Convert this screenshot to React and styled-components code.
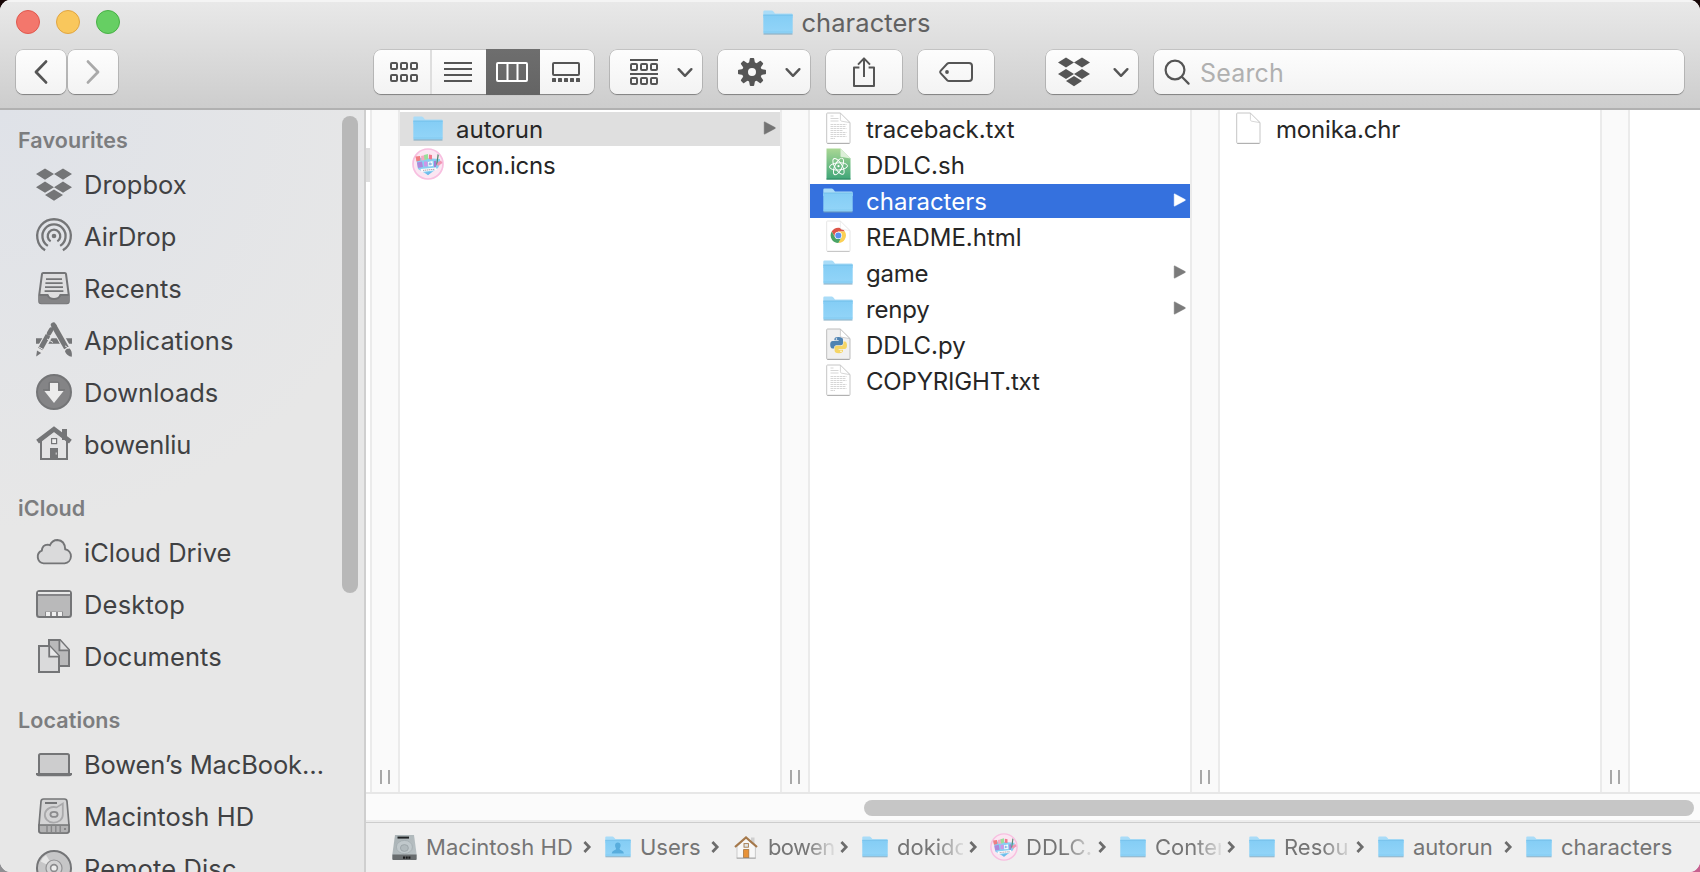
import React from "react";
import styled, { createGlobalStyle, css } from "styled-components";

const GlobalStyle = createGlobalStyle`
  *, *::before, *::after { box-sizing: border-box; }
  html, body { margin: 0; padding: 0; overflow: hidden; }
  body { font-family: Inter, "Liberation Sans", sans-serif; }
  button, input { font: inherit; border: 0; padding: 0; margin: 0; }
  svg { display: block; overflow: visible; flex: none; }
`;

/* ---------- window ---------- */

const Desktop = styled.div`
  width: 1700px;
  height: 872px;
  background:
    linear-gradient(#160606, #160606) top / 100% 50% no-repeat,
    linear-gradient(to right, #8f8f92, #c6608f) bottom / 100% 50% no-repeat;
`;

const Window = styled.div`
  display: flex;
  flex-direction: column;
  height: 100%;
  border-radius: 11px;
  overflow: hidden;
  background: #fff;
`;

const Header = styled.header`
  flex: none;
  height: 110px;
  background: linear-gradient(#e9e9e9, #cdcdcd);
  border-bottom: 2px solid #b1b1b1;
  box-shadow: inset 0 2px 0 #f4f4f4;
`;

const TitleRow = styled.div`
  display: grid;
  grid-template-columns: 1fr auto 1fr;
  align-items: center;
  height: 44px;
  padding: 0 23px 0 16px;
`;

const Lights = styled.div`
  display: flex;
  gap: 16px;
`;

const Light = styled.span`
  width: 24px;
  height: 24px;
  border-radius: 50%;
  background: ${(p) => p.$fill};
  border: 1px solid ${(p) => p.$edge};
`;

const Title = styled.h1`
  display: flex;
  align-items: center;
  gap: 9px;
  margin: 0;
  font-size: 25.5px;
  font-weight: 400;
  line-height: 30px;
  color: #616161;
  letter-spacing: ${(p) => p.$track}px;

  span { padding-top: 2px; }
`;

const Toolbar = styled.div`
  display: flex;
  align-items: center;
  padding: 6px 16px 0;
  height: 50px;
  color: #555;
`;

const raised = css`
  background: linear-gradient(#fdfdfd, #f3f3f3);
  border-radius: 7px;
  box-shadow: 0 0 0 0.6px rgba(0, 0, 0, 0.22), 0 1px 1px rgba(0, 0, 0, 0.3);
`;

const ToolButton = styled.button`
  ${raised}
  display: flex;
  align-items: center;
  justify-content: center;
  width: ${(p) => p.$width}px;
  height: 44px;
  margin-left: ${(p) => p.$before || 0}px;
  color: ${(p) => (p.disabled ? "#a9a9a9" : "#555")};
`;

const MenuButton = styled(ToolButton)`
  justify-content: space-between;
  padding: 0 9px 0 ${(p) => p.$inset}px;
`;

const Segments = styled.div`
  ${raised}
  display: flex;
  width: 220px;
  height: 44px;
  margin-left: 256px;
`;

const Segment = styled.button`
  display: flex;
  flex: 1;
  align-items: center;
  justify-content: center;
  height: ${(p) => (p.$active ? 46 : 44)}px;
  margin-top: ${(p) => (p.$active ? -1 : 0)}px;
  padding-right: 2px;
  color: ${(p) => (p.$active ? "#fff" : "#555")};
  background: ${(p) => (p.$active ? "linear-gradient(#6e6e6e, #646464)" : "transparent")};

  &:first-child {
    flex: 0 0 58px;
    padding: 0 0 0 4px;
    border-right: 2px solid #dedede;
  }
`;

const Search = styled.label`
  ${raised}
  display: flex;
  align-items: center;
  gap: 10px;
  width: 530px;
  height: 44px;
  margin-left: 16px;
  padding: 0 10px;
  color: #b0b0b0;
  font-size: 25px;
  letter-spacing: ${(p) => p.$track}px;

  span { padding-top: 2px; }
`;

const Body = styled.div`
  display: flex;
  flex: 1;
  min-height: 0;
`;

/* ---------- sidebar ---------- */

const Sidebar = styled.nav`
  position: relative;
  flex: none;
  width: 366px;
  padding-top: 11px;
  overflow: hidden;
  background: radial-gradient(circle at 0 0, #dfe2e8, #e7e7e7 420px);
  border-right: 2px solid #cfcfcf;
`;

const Group = styled.section`
  & + & { margin-top: 18px; }
`;

const GroupName = styled.h2`
  margin: 0;
  padding-left: 18px;
  font-size: 21.5px;
  font-weight: 600;
  line-height: 38px;
  color: #7c7d7f;
  letter-spacing: ${(p) => p.$track}px;
`;

const Place = styled.a`
  display: flex;
  align-items: center;
  gap: 12px;
  height: 52px;
  padding-left: 36px;
  font-size: 25.5px;
  line-height: 34px;
  white-space: nowrap;
  color: #404143;
  letter-spacing: ${(p) => p.$track}px;
`;

const SidebarThumb = styled.div`
  position: absolute;
  top: 6px;
  right: 6px;
  width: 16px;
  height: 477px;
  border-radius: 8px;
  background: #b8b8b8;
`;

/* ---------- columns ---------- */

const Main = styled.main`
  display: flex;
  flex: 1;
  flex-direction: column;
  min-width: 0;
`;

const Columns = styled.div`
  display: flex;
  height: 682px;
`;

const Column = styled.ul`
  display: flex;
  flex-direction: column;
  flex: none;
  gap: 2px;
  width: ${(p) => p.$width}px;
  margin: 0;
  padding: 2px 0 0;
  list-style: none;
`;

const rowTone = {
  plain: css`color: #262626; --arrow: #7b7b7b;`,
  open: css`color: #262626; --arrow: #737373; background: #dfdfdf;`,
  selected: css`color: #fff; --arrow: #fff; background: #3571de;`,
};

const FileRow = styled.li`
  display: flex;
  align-items: center;
  gap: 12px;
  height: 34px;
  padding: 0 4px 0 12px;
  font-size: 24px;
  line-height: 30px;
  white-space: nowrap;
  letter-spacing: ${(p) => p.$track}px;
  ${(p) => rowTone[p.$tone || "plain"]}

  > svg:last-child {
    margin-left: auto;
    margin-bottom: 2px;
  }
`;

const FileName = styled.span`
  padding-top: 2px;
`;

const Stub = styled.li`
  height: 34px;
  margin-top: 36px;
  background: #dedede;
`;

const FileIconBox = styled.span`
  display: flex;
  align-items: center;
  justify-content: center;
  width: 32px;
  height: 34px;
  padding-bottom: 2px;
`;

const Divider = styled.div`
  display: flex;
  flex: none;
  gap: 6px;
  align-items: flex-end;
  justify-content: center;
  width: 30px;
  padding: 0 0 8px;
  background: #fafafa;
  border: solid #ebebeb;
  border-width: 0 2px;

  i {
    width: 2px;
    height: 14px;
    background: #a8a8a8;
  }
`;

const Track = styled.div`
  display: flex;
  justify-content: flex-end;
  height: 30px;
  padding: 6px 6px 0;
  background: #fbfbfb;
  border-top: 2px solid #e7e7e7;
  border-bottom: 2px solid #ececec;
`;

const Thumb = styled.div`
  width: 830px;
  height: 16px;
  border-radius: 8px;
  background: #c6c6c6;
`;

/* ---------- path bar ---------- */

const PathBar = styled.footer`
  display: flex;
  flex: 1;
  align-items: center;
  padding: 0 0 1px 24px;
  background: #efefef;
  border-top: 1px solid #cdcdcd;
  color: #757575;
`;

const Crumb = styled.div`
  display: flex;
  align-items: center;
  flex: none;
`;

const CrumbIcon = styled.span`
  display: flex;
  justify-content: center;
  width: 28px;
  margin-right: 8px;
`;

const CrumbLabel = styled.span`
  width: ${(p) => p.$width}px;
  margin-right: 6px;
  overflow: hidden;
  font-size: 22px;
  line-height: 30px;
  white-space: nowrap;
  letter-spacing: ${(p) => p.$track}px;
  ${(p) => p.$fade && css`mask-image: linear-gradient(to right, #000 58%, rgba(0, 0, 0, 0.15));`}
`;

/* ---------- shared drawings ---------- */

const Folder = ({ width = 30, person }) => (
  <svg width={width} height={(width * 25) / 30} viewBox="0 0 30 25">
    <defs>
      <linearGradient id="folderFront" x1="0" y1="0" x2="0" y2="1">
        <stop offset="0" stopColor="#84cdf5" />
        <stop offset="1" stopColor="#93d5f8" />
      </linearGradient>
    </defs>
    <path d="M0.3 1.8Q0.3 0.6 1.5 0.6H8.6Q9.6 0.6 10.2 1.3L12 3.4H28.6Q29.7 3.4 29.7 4.5V8H0.3Z" fill="#a9dcf8" />
    <path d="M0.3 5H29.7V22.8Q29.7 23.8 28.7 23.8H1.3Q0.3 23.8 0.3 22.8Z" fill="url(#folderFront)" />
    <path d="M0.3 5H29.7" stroke="#6dbbe6" strokeWidth="0.8" />
    <path d="M0.6 22H29.4" stroke="#7cc6ee" strokeWidth="0.7" />
    <path d="M0.5 24H29.5" stroke="#6f9db8" strokeWidth="1" opacity="0.85" />
    {person && (
      <path d="M14.8 7.5C16.8 7.5 18 9 18 11C18 12.8 17.2 13.7 16.8 14.6C16.8 16.5 21.5 16 21.8 20.2H7.8C8.1 16 12.8 16.5 12.8 14.6C12.4 13.7 11.6 12.8 11.6 11C11.6 9 12.8 7.5 14.8 7.5Z" fill="#58addd" />
    )}
  </svg>
);

const ClubIcon = ({ size = 32 }) => (
  <svg width={size} height={size} viewBox="0 0 32 32">
    <circle cx="16" cy="16" r="15" fill="#fbe6f2" stroke="#f8bfe0" strokeWidth="1.7" />
    <g opacity="0.88">
      <path d="M4 9.5L28 11V16L26 20L16 27L6 21Z" fill="#79cdf1" />
      <path d="M3.5 8.5L8 8L8.5 12.5L4.5 13.5Z" fill="#ef6f73" />
      <path d="M9 8L13 7L13.5 12L9.5 12.5Z" fill="#f6a0bd" />
      <path d="M12 7L16 6V11L12.5 12Z" fill="#8be08f" />
      <path d="M17 6.5L20 7V11.5L16.8 11Z" fill="#ee6a80" />
      <path d="M5 14.5L10 13.5L11 19L6 20Z" fill="#a57ad8" />
      <path d="M12 13.5H15.5V18.5H12.2Z" fill="#ca8ae6" />
      <path d="M16 14L20.5 13L21 18L16.4 18.5Z" fill="#fff" />
      <path d="M18 14.4V17.4M16.8 16H20" stroke="#5b9fe0" strokeWidth="1" />
      <path d="M22 13L24 12.8V19L22 19.2Z" fill="#9a70cf" />
      <path d="M24 15L29 12.5L30.5 15L26 18Z" fill="#f08cab" />
      <path d="M25.6 6L26.8 7L25.5 15L24 18Z" fill="#3d7a5c" />
      <path d="M8.5 21L24 19.5L25 22L9.5 24Z" fill="#fff" />
      <path d="M11 22.4L22.5 21.3" stroke="#9a8a98" strokeWidth="0.9" strokeDasharray="1.4 0.6" />
      <path d="M13 24.5L20 23.8L16 27.2Z" fill="#5bb6ea" />
    </g>
  </svg>
);

const pageShape = "M1.5 1H14.2L24 10.6V30.5Q24 31.3 23.2 31.3H1.5Q0.7 31.3 0.7 30.5V1.8Q0.7 1 1.5 1Z";

const Page = ({ fill = "#fff", edge = "#c6c6c6", fold = "#fff", children }) => (
  <svg width="25" height="32" viewBox="0 0 25 32">
    <path d={pageShape} fill={fill} stroke={edge} strokeWidth="1" />
    {children}
    <path d="M14.4 1.2V7.6Q14.4 8.8 15.6 9.2L23.8 10.6Z" fill={fold} stroke={edge} strokeWidth="0.7" />
    <path d="M1.2 31.4H23.6" stroke="#000" strokeOpacity="0.22" strokeWidth="0.8" />
  </svg>
);

const TextPage = () => (
  <Page>
    {[4, 6.5, 9].map((y) => (
      <path key={y} d={`M4.5 ${y}H${y === 4 ? 7.5 : 12.5}`} stroke="#cbcbcb" strokeWidth="0.8" />
    ))}
    {[12.5, 14.5, 16.5, 18.5, 20.5, 22.5, 24.5, 26.5].map((y, i) => (
      <path key={y} d={`M4.5 ${y}H${[20.5, 19.5, 20.5, 17, 20.5, 20, 20.5, 9][i]}`} stroke="#cbcbcb" strokeWidth="0.8" strokeDasharray="2.6 0.5" />
    ))}
  </Page>
);

const AtomPage = () => (
  <svg width="25" height="32" viewBox="0 0 25 32">
    <defs>
      <linearGradient id="atomPage" x1="0" y1="0" x2="0" y2="1">
        <stop offset="0" stopColor="#a9d794" />
        <stop offset="1" stopColor="#3fa678" />
      </linearGradient>
    </defs>
    <path d="M0.5 0.6H14.5L24.5 10.5V31.4H0.5Z" fill="url(#atomPage)" />
    <path d="M14.5 0.6V8.8L24.5 10.5Z" fill="#dcefd8" />
    <path d="M0.5 31H24.5" stroke="#2d8560" strokeWidth="0.9" />
    <g fill="none" stroke="#fff" strokeWidth="0.95">
      <ellipse cx="12.5" cy="18.4" rx="9" ry="3.6" transform="rotate(-4 12.5 18.4)" />
      <ellipse cx="12.5" cy="18.4" rx="9" ry="3.6" transform="rotate(58 12.5 18.4)" />
      <ellipse cx="12.5" cy="18.4" rx="9" ry="3.6" transform="rotate(116 12.5 18.4)" />
    </g>
    <circle cx="12.5" cy="18.2" r="1.1" fill="#fff" />
  </svg>
);

const ChromePage = () => (
  <Page edge="#e6e6e6">
    <g transform="translate(12.3 15.4)">
      <path d="M-6.6 -3.8A7.6 7.6 0 0 1 6.6 -3.8L0 -3.8L-3.3 1.9Z" fill="#dc5549" />
      <path d="M6.6 -3.8A7.6 7.6 0 0 1 0 7.6L3.3 1.9L0 -3.8Z" fill="#fbd055" />
      <path d="M0 7.6A7.6 7.6 0 0 1 -6.6 -3.8L-3.3 1.9L3.3 1.9Z" fill="#4aa465" />
      <circle r="3.7" fill="#fff" />
      <circle r="3" fill="#5a90f0" />
    </g>
  </Page>
);

const PythonPage = () => (
  <Page fill="#f0f0f0" edge="#bdbdbd">
    <path d="M12.4 9C15.6 9 17 9.9 17 11.6V15C17 16.5 16 17.2 14.6 17.2H10.4C8.9 17.2 8.2 18.2 8.2 19.6V20.6H6.6C4.8 20.6 4.2 18.9 4.2 16.6C4.2 14.3 5 13 6.8 13H12.6V12.3H8.4V11.4C8.4 9.8 9.6 9 12.4 9Z" fill="#4f83b2" />
    <path d="M12.8 25.2C9.6 25.2 8.6 24.2 8.6 22.6V20C8.6 18.6 9.4 17.8 10.8 17.8H15C16.4 17.8 17.4 16.8 17.4 15.4V13.6H18.8C20.4 13.6 21 15.4 21 17.5C21 19.8 20.2 21 18.6 21H12.6V21.8H17V22.8C17 24.4 15.8 25.2 12.8 25.2Z" fill="#f5d565" />
    <circle cx="10.4" cy="11" r="0.8" fill="#fff" />
    <circle cx="15" cy="23.3" r="0.8" fill="#fff" />
  </Page>
);

const Arrow = () => (
  <svg width="12" height="14" viewBox="0 0 12 14">
    <path d="M0.8 0.9L11.2 6.6Q11.8 7 11.2 7.4L0.8 13.1Q0.2 13.4 0.2 12.6V1.4Q0.2 0.6 0.8 0.9Z" fill="var(--arrow)" stroke="var(--arrow)" strokeWidth="0.5" />
  </svg>
);

const Chevron = () => (
  <svg width="16" height="10" viewBox="0 0 16 10" fill="none" stroke="currentColor" strokeWidth="2.4" strokeLinecap="round" strokeLinejoin="round">
    <path d="M1.6 2.2L8 8.8L14.4 2.2" />
  </svg>
);

const DropboxMark = ({ width = 36 }) => (
  <svg width={width} height={(width * 33) / 36} viewBox="0 0 36 33" fill="currentColor">
    <path d="M9 0.6L18 6.1L9 11.8L0 6.1ZM27 0.6L36 6.1L27 11.8L18 6.1ZM9 13.6L18 19.2L9 24.8L0 19.2ZM27 13.6L36 19.2L27 24.8L18 19.2ZM18 21.4L27 27L18 32.8L9 27Z" />
  </svg>
);

const SmallSquares = ({ y }) =>
  [1, 11, 21].map((x) => <rect key={x} x={x} y={y + 1} width="6" height="6" rx="1" />);

/* ---------- toolbar drawings ---------- */

const toolStroke = { fill: "none", stroke: "currentColor", strokeWidth: 2 };

const GridIcon = () => (
  <svg width="28" height="20" {...toolStroke}><SmallSquares y={0} /><SmallSquares y={12} /></svg>
);
const ListIcon = () => (
  <svg width="28" height="20" {...toolStroke}><path d="M0 1H28M0 7H28M0 13H28M0 19H28" /></svg>
);
const ColumnsIcon = () => (
  <svg width="32" height="20" {...toolStroke}>
    <rect x="1" y="1" width="30" height="18" rx="1" /><path d="M11.5 1V19M21.5 1V19" />
  </svg>
);
const GalleryIcon = () => (
  <svg width="28" height="20" {...toolStroke}>
    <rect x="1" y="1" width="26" height="12" rx="1" />
    {[0, 6, 12, 18, 24].map((x) => (
      <rect key={x} x={x} y="16" width="4" height="4" rx="0.6" fill="currentColor" stroke="none" />
    ))}
  </svg>
);
const ArrangeIcon = () => (
  <svg width="28" height="26" {...toolStroke}>
    <path d="M0 1H28M0 15H28" /><SmallSquares y={4} /><SmallSquares y={18} />
  </svg>
);
const GearIcon = () => (
  <svg width="28" height="28" viewBox="-14 -14 28 28" fill="currentColor">
    <path fillRule="evenodd" d="M0 -10A10 10 0 1 1 0 10A10 10 0 1 1 0 -10ZM0 -4A4 4 0 1 0 0 4A4 4 0 1 0 0 -4Z" />
    {[0, 45, 90, 135, 180, 225, 270, 315].map((a) => (
      <path key={a} d="M-3 -9L-2.2 -13.3Q-2.1 -14 -1.4 -14H1.4Q2.1 -14 2.2 -13.3L3 -9Z" transform={`rotate(${a})`} />
    ))}
  </svg>
);
const ShareIcon = () => (
  <svg width="22" height="30" {...toolStroke} strokeLinejoin="round">
    <path d="M6.4 10.5H1V29H21V10.5H15.6" /><path d="M11 20V1.8M5 7.6L11 1.4L17 7.6" />
  </svg>
);
const TagIcon = () => (
  <svg width="34" height="20" {...toolStroke}>
    <path d="M10 1H30Q33 1 33 4V16Q33 19 30 19H10Q9 19 8.2 18.2L1.6 11.2Q0.6 10 1.6 8.8L8.2 1.8Q9 1 10 1Z" />
    <circle cx="8" cy="10" r="1.9" fill="currentColor" stroke="none" />
  </svg>
);
const SearchIcon = () => (
  <svg width="26" height="26" fill="none" stroke="#555" strokeWidth="2.2" strokeLinecap="round">
    <circle cx="11" cy="11" r="9.4" /><path d="M17.8 17.8L24.6 24.6" />
  </svg>
);
const NavArrow = ({ flip }) => (
  <svg width="14" height="24" fill="none" stroke="currentColor" strokeWidth="2.8" strokeLinecap="round" strokeLinejoin="round">
    <path d={flip ? "M2 1.6L12 12L2 22.4" : "M12 1.6L2 12L12 22.4"} />
  </svg>
);

/* ---------- sidebar drawings ---------- */

const Side = ({ children }) => (
  <svg width="36" height="36" viewBox="0 0 36 36" fill="none" stroke="#747577" strokeWidth="2">{children}</svg>
);

const arc = (r) => `M${18 - r * 0.53} ${17 + r * 0.85}A${r} ${r} 0 1 1 ${18 + r * 0.53} ${17 + r * 0.85}`;

const sideIcons = {
  dropbox: <DropboxMark />,
  airdrop: <Side><path strokeWidth="2.3" d={arc(16.8) + arc(11.6) + arc(6.3)} /><circle cx="18" cy="17" r="2.3" fill="#747577" stroke="none" /></Side>,
  recents: (
    <Side>
      <path d="M7.2 2H28.8Q29.8 2 30 3L32.8 24V30Q32.8 32.2 30.8 32.2H5.2Q3.2 32.2 3.2 30V24L6 3Q6.2 2 7.2 2Z" fill="#dededf" />
      <path d="M3 24H12.5Q13.5 28 18 28Q22.5 28 23.5 24H33V30Q33 32.4 30.8 32.4H5.2Q3 32.4 3 30Z" fill="#858587" stroke="none" />
      <path d="M3.2 24H11.6Q13 28 18 28Q23 28 24.4 24H32.8" />
      <path strokeWidth="1.7" d="M10 8.2H26M9.4 12.2H26.6M9 16.2H27M8.6 20.2H27.4" />
    </Side>
  ),
  applications: (
    <Side>
      <path d="M0 18H36" strokeWidth="5.6" />
      <path d="M3.4 28.5L15.5 7M18 2L33.5 30" stroke="#e6e6e7" strokeWidth="8" />
      <path d="M4.4 26L12 12.2" strokeWidth="5" />
      <path d="M13 10.4L15.2 6.6" strokeWidth="4.6" strokeLinecap="round" />
      <path d="M0.2 33.6L1 27.6L5.2 30Z" fill="#747577" stroke="none" />
      <path d="M17.6 2.4L30.4 25" strokeWidth="5.2" />
      <path d="M17.4 2L18 3" strokeWidth="5.2" strokeLinecap="round" />
      <path d="M29 28.4Q30 25.2 33.6 25.6Q36.4 28.2 35.8 33.8Q30.8 32.8 29 28.4Z" fill="#747577" stroke="none" />
      <path d="M11 16L17 19.5M3 24L8 27M29 22.8L32.6 25.2" stroke="#e6e6e7" strokeWidth="1" />
    </Side>
  ),
  downloads: (
    <Side>
      <circle cx="18" cy="17" r="17" fill="#848486" />
      <path d="M14 8H22V16H27.6L18 28L8.4 16H14Z" fill="#ececec" stroke="none" />
      <path d="M14.6 7H21.4Q23 7 23 8.4V14.8H29" strokeWidth="1.2" />
      <path d="M14.6 7Q13 7 13 8.4V14.8H7" strokeWidth="1.2" />
    </Side>
  ),
  home: (
    <Side>
      <path d="M5 13V32H31V13L18 3Z" fill="#e3e3e4" />
      <path d="M26 2H31V13H26Z" fill="#747577" stroke="none" />
      <path d="M1.6 14.6L18 2.2L34.4 14.6" strokeWidth="4.6" />
      <path d="M14 21H22V32H14Z" fill="#747577" stroke="none" />
      <rect x="15.6" y="11.6" width="5" height="5" strokeWidth="1.2" fill="#efefef" />
      <path d="M20.2 25.5V27.6" stroke="#ddd" strokeWidth="1" />
    </Side>
  ),
  cloud: (
    <Side>
      <path d="M7.6 28.4A6.7 6.7 0 0 1 5.8 15.6Q6.4 9.8 11.6 9.6Q13 9.6 14 10.2Q16.2 5 21.4 5Q28.8 5.4 29.2 14.2A7.2 7.2 0 0 1 28.6 28.4Z" fill="#dadadb" strokeWidth="1.9" />
    </Side>
  ),
  desktop: (
    <Side>
      <rect x="1" y="4" width="34" height="26" rx="2.5" fill="#b9b9ba" />
      <path d="M2 5H34V7H2Z" fill="#e8e8e8" stroke="none" />
      <path d="M1 8H35" strokeWidth="1.6" />
      <path d="M9 24.6H27V29H9Z" fill="#8a8a8c" stroke="none" />
      <path d="M10 25H14V29H10ZM16 25H20V29H16ZM22 25H26V29H22Z" fill="#f0f0f0" stroke="none" />
    </Side>
  ),
  documents: (
    <Side>
      <path d="M13 1H24L33 11V27H13Z" fill="#b9b9ba" />
      <path d="M23.4 1V11.4H33" fill="#dcdcdd" strokeWidth="1.8" />
      <path d="M3 7H13.6L23 17V33H3Z" fill="#dadadb" />
      <path d="M13.2 7V17.6H23" fill="#e8e8e9" strokeWidth="1.8" />
    </Side>
  ),
  laptop: (
    <Side>
      <rect x="3" y="7" width="30" height="20" rx="1.6" fill="#cdcdce" />
      <path d="M0 26H36V27.6Q35.6 29.2 33.4 29.2H2.6Q0.4 29.2 0 27.6Z" fill="#747577" stroke="none" />
    </Side>
  ),
  disk: (
    <Side>
      <path d="M7.6 0H28.4Q30.8 0 31 2.4L33 26V31.6Q33 34 30.6 34H5.4Q3 34 3 31.6V26L5 2.4Q5.2 0 7.6 0Z" fill="#d4d4d5" strokeWidth="1.7" />
      <path d="M3 26H33V31.6Q33 34 30.6 34H5.4Q3 34 3 31.6Z" fill="#b2b2b3" strokeWidth="1.7" />
      <path d="M9 4H21" strokeWidth="2" />
      <path d="M26.8 4.6V15.4A9 7.8 0 1 1 20.6 8.4Z" stroke="#a9a9ab" strokeWidth="1.8" />
      <ellipse cx="18" cy="15.4" rx="3.6" ry="2.5" strokeWidth="1.8" stroke="#8b8b8d" />
      <path d="M11 27V33M15.4 27V33M19.8 27V33M24.2 27V33" strokeWidth="1.4" stroke="#868688" />
      <circle cx="29" cy="30" r="1" fill="#747577" stroke="none" />
    </Side>
  ),
  disc: (
    <Side>
      <circle cx="18" cy="17" r="17" fill="#c6c6c7" />
      <path d="M18 17L4.6 10.4A15.4 15.4 0 0 1 10 4Z" fill="#e6e6e6" stroke="none" />
      <circle cx="18" cy="17" r="8" stroke="#939395" strokeWidth="1.2" fill="#d3d3d4" />
      <circle cx="18" cy="17" r="3.4" strokeWidth="1.6" stroke="#8b8b8d" fill="#ececec" />
    </Side>
  ),
};

const PlaceIcon = styled.span`
  display: flex;
  align-items: center;
  width: 36px;
  height: 36px;
  color: #747577;
  ${(p) => p.$lift && css`padding-bottom: 2px;`}
`;

/* ---------- path bar drawings ---------- */

const DriveIcon = () => (
  <svg width="25" height="27" viewBox="0 0 25 27">
    <defs>
      <linearGradient id="driveTop" x1="0" y1="0" x2="1" y2="1">
        <stop offset="0" stopColor="#a9b2b5" />
        <stop offset="1" stopColor="#bcc4c7" />
      </linearGradient>
    </defs>
    <path d="M3 1H22L24.6 20V25Q24.6 26 23.6 26H1.4Q0.4 26 0.4 25V20Z" fill="url(#driveTop)" />
    <path d="M0.4 20.4H24.6V25Q24.6 26 23.6 26H1.4Q0.4 26 0.4 25Z" fill="#686c6e" />
    <path d="M11 23.6H19" stroke="#18191a" strokeWidth="2.4" strokeDasharray="2 0.7" />
    <path d="M5.5 3.6H17" stroke="#202325" strokeWidth="2" />
    <ellipse cx="12.4" cy="13" rx="8" ry="6.6" fill="#c0c8cb" stroke="#a3acb0" strokeWidth="0.8" />
    <ellipse cx="12.4" cy="14" rx="4" ry="3.4" fill="#b1babd" stroke="#939ca0" strokeWidth="0.7" />
  </svg>
);

const HouseIcon = () => (
  <svg width="24" height="24" viewBox="0 0 24 24">
    <path d="M17 2.5H20.5V9H17Z" fill="#cfcfcf" />
    <path d="M3 11.5L12 3L21.4 11.5V23H3Z" fill="#f7f7f7" stroke="#c0c0c0" strokeWidth="0.8" />
    <path d="M1 12L12 2.4L23 12" fill="none" stroke="#a5784a" strokeWidth="2.2" />
    <rect x="9.6" y="14.6" width="5.2" height="8" fill="#e79238" stroke="#a8743c" strokeWidth="0.8" />
    <rect x="10" y="8.6" width="4.4" height="3.6" fill="#dfe7ec" stroke="#a5784a" strokeWidth="0.9" />
    <path d="M2.6 23.2H21.8" stroke="#999" strokeWidth="0.8" />
  </svg>
);

const CrumbArrow = styled.svg.attrs({
  width: 8,
  height: 12,
  viewBox: "0 0 8 12",
  fill: "none",
  stroke: "#6c6c6c",
  strokeWidth: 2.7,
})`
  margin-right: 13px;
`;

/* ---------- data ---------- */

const groups = [
  {
    name: "Favourites", track: 0.1,
    places: [
      ["Dropbox", "dropbox", 0],
      ["AirDrop", "airdrop", 0],
      ["Recents", "recents", 0.12],
      ["Applications", "applications", 0.07],
      ["Downloads", "downloads", 0],
      ["bowenliu", "home", -0.12],
    ],
  },
  {
    name: "iCloud", track: 0.1,
    places: [
      ["iCloud Drive", "cloud", 0],
      ["Desktop", "desktop", 0.18],
      ["Documents", "documents", 0.06],
    ],
  },
  {
    name: "Locations", track: 0.1,
    places: [
      ["Bowen’s MacBook…", "laptop", -0.13],
      ["Macintosh HD", "disk", 0.04],
      ["Remote Disc", "disc", 0.12],
    ],
  },
];

const columns = [
  [
    { name: "autorun", icon: <Folder />, folder: true, tone: "open", track: 0 },
    { name: "icon.icns", icon: <ClubIcon />, track: -0.22 },
  ],
  [
    { name: "traceback.txt", icon: <TextPage />, track: -0.08 },
    { name: "DDLC.sh", icon: <AtomPage />, track: 0 },
    { name: "characters", icon: <Folder />, folder: true, tone: "selected", track: 0 },
    { name: "README.html", icon: <ChromePage />, track: 0 },
    { name: "game", icon: <Folder />, folder: true, track: -0.2 },
    { name: "renpy", icon: <Folder />, folder: true, track: -0.2 },
    { name: "DDLC.py", icon: <PythonPage />, track: 0 },
    { name: "COPYRIGHT.txt", icon: <TextPage />, track: -0.18 },
  ],
  [{ name: "monika.chr", icon: <Page />, track: -0.18 }],
];

const crumbs = [
  { name: "Macintosh HD", icon: <DriveIcon />, width: 151, track: 0.04 },
  { name: "Users", icon: <Folder width={26} person />, width: 65, track: 0 },
  { name: "bowen", icon: <HouseIcon />, width: 66, fade: true, track: -0.6 },
  { name: "dokido", icon: <Folder width={26} />, width: 66, fade: true, track: 0 },
  { name: "DDLC.", icon: <ClubIcon size={28} />, width: 66, fade: true, track: 0 },
  { name: "Conten", icon: <Folder width={26} />, width: 66, fade: true, track: 0 },
  { name: "Resou", icon: <Folder width={26} />, width: 66, fade: true, track: 0 },
  { name: "autorun", icon: <Folder width={26} />, width: 85, track: 0 },
  { name: "characters", icon: <Folder width={26} />, width: 118, track: 0.05 },
];

const ColumnDivider = () => (
  <Divider><i /><i /></Divider>
);

export default function App() {
  return (
    <Desktop>
      <GlobalStyle />
      <Window>
        <Header>
          <TitleRow>
            <Lights>
              <Light $fill="#f3776c" $edge="#e0584e" />
              <Light $fill="#f9c75c" $edge="#e0a542" />
              <Light $fill="#66cf63" $edge="#48b046" />
            </Lights>
            <Title $track={0.05}><Folder /><span>characters</span></Title>
          </TitleRow>
          <Toolbar>
            <ToolButton $width={50}><NavArrow /></ToolButton>
            <ToolButton $width={50} $before={2} disabled><NavArrow flip /></ToolButton>
            <Segments>
              <Segment><GridIcon /></Segment>
              <Segment><ListIcon /></Segment>
              <Segment $active><ColumnsIcon /></Segment>
              <Segment><GalleryIcon /></Segment>
            </Segments>
            <MenuButton $width={92} $before={16} $inset={20}><ArrangeIcon /><Chevron /></MenuButton>
            <MenuButton $width={92} $before={16} $inset={20}><GearIcon /><Chevron /></MenuButton>
            <ToolButton $width={76} $before={16}><ShareIcon /></ToolButton>
            <ToolButton $width={76} $before={16}><TagIcon /></ToolButton>
            <MenuButton $width={92} $before={52} $inset={12}><DropboxMark width={32} /><Chevron /></MenuButton>
            <Search $track={0.18}><SearchIcon /><span>Search</span></Search>
          </Toolbar>
        </Header>
        <Body>
          <Sidebar>
            {groups.map((g) => (
              <Group key={g.name}>
                <GroupName $track={g.track}>{g.name}</GroupName>
                {g.places.map(([name, icon, track]) => (
                  <Place key={name} $track={track}>
                    <PlaceIcon $lift={icon === "dropbox"}>{sideIcons[icon]}</PlaceIcon>
                    <span>{name}</span>
                  </Place>
                ))}
              </Group>
            ))}
            <SidebarThumb />
          </Sidebar>
          <Main>
            <Columns>
              <Column $width={4}><Stub /></Column>
              {columns.map((files, i) => (
                <React.Fragment key={i}>
                  <ColumnDivider />
                  <Column $width={380}>
                    {files.map((f) => (
                      <FileRow key={f.name} $tone={f.tone} $track={f.track}>
                        <FileIconBox>{f.icon}</FileIconBox>
                        <FileName>{f.name}</FileName>
                        {f.folder && <Arrow />}
                      </FileRow>
                    ))}
                  </Column>
                </React.Fragment>
              ))}
              <ColumnDivider />
            </Columns>
            <Track><Thumb /></Track>
            <PathBar>
              {crumbs.map((c, i) => (
                <Crumb key={c.name}>
                  <CrumbIcon>{c.icon}</CrumbIcon>
                  <CrumbLabel $width={c.width} $fade={c.fade} $track={c.track}>{c.name}</CrumbLabel>
                  {i < crumbs.length - 1 && <CrumbArrow><path d="M1.4 1L6.2 6L1.4 11" /></CrumbArrow>}
                </Crumb>
              ))}
            </PathBar>
          </Main>
        </Body>
      </Window>
    </Desktop>
  );
}
